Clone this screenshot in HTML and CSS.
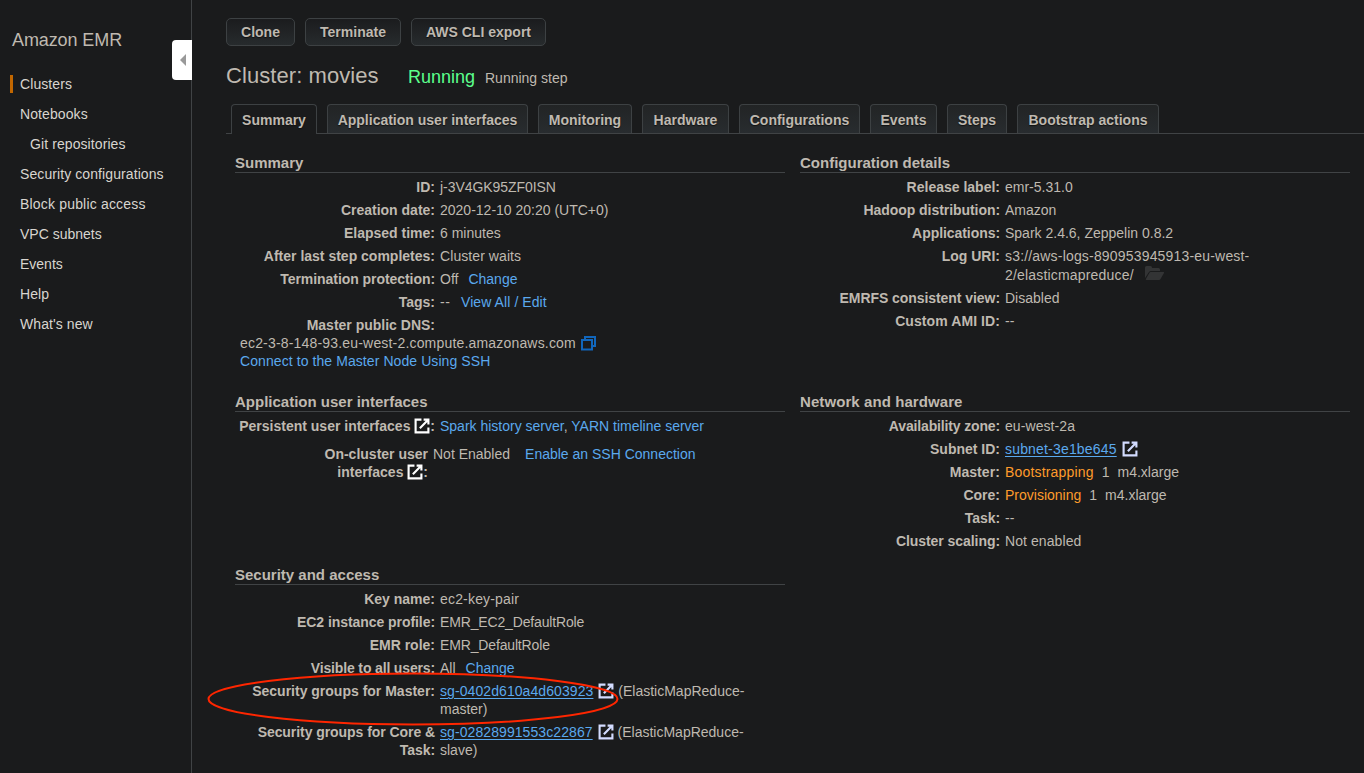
FILE: index.html
```html
<!DOCTYPE html>
<html lang="en">
<head>
<meta charset="utf-8">
<title>Amazon EMR</title>
<link rel="stylesheet" href="styles.css">
</head>
<body>
<svg class="defs" width="0" height="0">
  <symbol id="ext" viewBox="0.5 0.5 15 15">
    <path d="M7.500 2H2V14H14V9.500" fill="none" stroke="currentColor" stroke-width="2"/>
    <path d="M9.500 2H14V6.500M14 2L6 10" fill="none" stroke="currentColor" stroke-width="2"/>
  </symbol>
</svg>
<div class="app">
  <aside class="sidebar">
    <h2 class="brand">Amazon EMR</h2>
    <nav class="nav">
      <a class="nav-item active">Clusters</a>
      <a class="nav-item">Notebooks</a>
      <a class="nav-item sub">Git repositories</a>
      <a class="nav-item">Security configurations</a>
      <a class="nav-item wider">Block public access</a>
      <a class="nav-item flat">VPC subnets</a>
      <a class="nav-item flat">Events</a>
      <a class="nav-item">Help</a>
      <a class="nav-item">What's new</a>
    </nav>
    <div class="collapse"><svg width="6" height="12" viewBox="0 0 6 12"><path d="M6 0V12L0 6Z" fill="#999"/></svg></div>
  </aside>
  <main class="main">
    <div class="buttons">
      <button class="btn clone">Clone</button>
      <button class="btn terminate">Terminate</button>
      <button class="btn export">AWS CLI export</button>
    </div>
    <header class="heading">
      <h1 class="title">Cluster: movies</h1>
      <span class="state">Running</span>
      <span class="detail">Running step</span>
    </header>
    <div class="tabs">
      <div class="tab t1 current">Summary</div>
      <div class="tab t2">Application user interfaces</div>
      <div class="tab t3">Monitoring</div>
      <div class="tab t4">Hardware</div>
      <div class="tab t5">Configurations</div>
      <div class="tab t6">Events</div>
      <div class="tab t7">Steps</div>
      <div class="tab t8">Bootstrap actions</div>
    </div>
    <div class="grid">
      <section class="card">
        <h3 class="card-title">Summary</h3>
        <div class="row"><b class="label">ID:</b><span class="tight">j-3V4GK95ZF0ISN</span></div>
        <div class="row"><b class="label">Creation date:</b><span>2020-12-10 20:20 (UTC+0)</span></div>
        <div class="row"><b class="label">Elapsed time:</b><span>6 minutes</span></div>
        <div class="row"><b class="label">After last step completes:</b><span class="wide">Cluster waits</span></div>
        <div class="row"><b class="label tight">Termination protection:</b><span>Off</span><a class="link gap">Change</a></div>
        <div class="row"><b class="label">Tags:</b><span class="dashes">--</span><a class="link gap wide">View All / Edit</a></div>
        <div class="row"><b class="label">Master public DNS:</b></div>
        <div class="dns"><span class="wider">ec2-3-8-148-93.eu-west-2.compute.amazonaws.com</span><svg class="copy" width="15" height="15" viewBox="0 0 15 15"><path d="M4 4V1H14V10H11M1 4H11V13.500H1Z" fill="none" stroke="#1166bb" stroke-width="2"/></svg></div>
        <div class="dns"><a class="link wide">Connect to the Master Node Using SSH</a></div>
      </section>
      <section class="card">
        <h3 class="card-title">Configuration details</h3>
        <div class="row"><b class="label">Release label:</b><span>emr-5.31.0</span></div>
        <div class="row"><b class="label tight">Hadoop distribution:</b><span>Amazon</span></div>
        <div class="row"><b class="label tight">Applications:</b><span>Spark 2.4.6, Zeppelin 0.8.2</span></div>
        <div class="row log"><b class="label">Log URI:</b><span class="wider">s3://aws-logs-890953945913-eu-west-<br>2/elasticmapreduce/<svg class="folder" width="20" height="14" viewBox="0 0 20 14"><path d="M0 12V1.500Q0 0 1.500 0H5.500Q7 0 7 1.500V2H13.500Q15 2 15 3.500V5H6Q4.800 5 4 6Z" fill="#333435"/><path d="M5.500 6H18.500Q19.500 6 19 7L15.500 13Q15 14 14 14H1.500Q0.300 14 1 12.800L4.300 7Q4.800 6 5.500 6Z" fill="#333435"/></svg></span></div>
        <div class="row"><b class="label tight">EMRFS consistent view:</b><span>Disabled</span></div>
        <div class="row"><b class="label wide">Custom AMI ID:</b><span>--</span></div>
      </section>
      <section class="card">
        <h3 class="card-title">Application user interfaces</h3>
        <div class="row"><b class="label">Persistent user interfaces <svg class="ext white"><use href="#ext"/></svg>:</b><span><a class="link">Spark history server</a>, <a class="link">YARN timeline server</a></span></div>
        <div class="row oncluster"><b class="label">On-cluster user<br>interfaces <svg class="ext white"><use href="#ext"/></svg>:</b><span>Not Enabled</span><a class="link widegap">Enable an SSH Connection</a></div>
      </section>
      <section class="card">
        <h3 class="card-title wide">Network and hardware</h3>
        <div class="row"><b class="label tighter">Availability zone:</b><span class="wide">eu-west-2a</span></div>
        <div class="row"><b class="label">Subnet ID:</b><span><a class="link underlined wider">subnet-3e1be645</a><svg class="ext lilac"><use href="#ext"/></svg></span></div>
        <div class="row spaced"><b class="label wide">Master:</b><span class="pending wider">Bootstrapping</span><span>1</span><span>m4.xlarge</span></div>
        <div class="row spaced"><b class="label">Core:</b><span class="pending">Provisioning</span><span>1</span><span>m4.xlarge</span></div>
        <div class="row"><b class="label tight">Task:</b><span>--</span></div>
        <div class="row"><b class="label tight">Cluster scaling:</b><span class="wide">Not enabled</span></div>
      </section>
      <section class="card">
        <h3 class="card-title">Security and access</h3>
        <div class="row"><b class="label">Key name:</b><span class="wider">ec2-key-pair</span></div>
        <div class="row"><b class="label tight">EC2 instance profile:</b><span class="tighter">EMR_EC2_DefaultRole</span></div>
        <div class="row"><b class="label">EMR role:</b><span class="tighter">EMR_DefaultRole</span></div>
        <div class="row"><b class="label tighter">Visible to all users:</b><span>All</span><a class="link gap">Change</a></div>
        <div class="row"><b class="label">Security groups for Master:</b><span><a class="link underlined wide">sg-0402d610a4d603923</a><svg class="ext lilac"><use href="#ext"/></svg> (ElasticMapReduce-<br>master)</span></div>
        <div class="row"><b class="label tight">Security groups for Core &amp;<br>Task:</b><span><a class="link underlined wide">sg-02828991553c22867</a><svg class="ext lilac"><use href="#ext"/></svg> (ElasticMapReduce-<br>slave)</span></div>
      </section>
    </div>
  </main>
  <svg class="marker" width="414" height="56" viewBox="0 0 414 56"><ellipse cx="207" cy="28" rx="204.500" ry="25.500" fill="none" stroke="#ff2600" stroke-width="2"/></svg>
</div>
</body>
</html>
```
FILE: styles.css
```css
* { box-sizing: border-box; }
body {
  margin: 0;
  background: #1a1b1c;
  color: #bfb9b0;
  font: 14px/18px "Liberation Sans", Arial, sans-serif;
}
.defs { position: absolute; }
.app { position: relative; display: flex; width: 1364px; height: 773px; overflow: hidden; }
.sidebar { position: relative; flex: none; width: 192px; border-right: 1px solid #404345; padding-top: 28px; }
.brand { margin: 0 0 20px 12px; font-size: 18px; line-height: 24px; font-weight: 400; letter-spacing: -0.1px; }
.nav { display: flex; flex-direction: column; gap: 12px; padding: 3px 0 0 10px; }
.nav-item { padding-left: 10px; color: #d8d5cf; letter-spacing: 0.09px; }
.nav-item.active { border-left: 3px solid #c26700; padding-left: 7px; }
.nav-item.sub { padding-left: 20px; }
.nav-item.flat { letter-spacing: 0; }
.collapse {
  position: absolute; left: 172px; top: 40px; width: 20px; height: 40px;
  display: flex; align-items: center; justify-content: flex-end; padding-right: 6px;
  background: #fff; border-radius: 4px 0 0 4px;
}
.main { flex: none; width: 1172px; padding: 18px 0 0 34px; }
.buttons { display: flex; gap: 10px; }
.btn {
  height: 28px; padding: 0; border: 1px solid #3d4143; border-radius: 5px;
  background: linear-gradient(#1b1c1e, #272b2d); color: #bfb9b0;
  font: bold 14px/18px "Liberation Sans", Arial, sans-serif;
  text-shadow: 0 1px 1px #111;
}
.clone { width: 69px; }
.terminate { width: 96px; }
.export { width: 135px; }
.heading { display: flex; align-items: baseline; height: 58px; padding-top: 16px; }
.title { margin: 0; width: 182px; font-size: 22px; line-height: 28px; font-weight: 400; letter-spacing: 0.07px; }
.state { width: 77px; font-size: 18px; color: #5cff8c; }
.tabs { display: flex; gap: 10px; height: 30px; padding-left: 5px; border-bottom: 1px solid #404345; }
.tab {
  height: 29px; padding-top: 6px; border: 1px solid #3d4143; border-bottom: 0; border-radius: 4px 4px 0 0;
  background: linear-gradient(#222425, #282c2f); font-weight: bold; text-align: center; white-space: nowrap;
  text-shadow: 0 1px 1px #111;
}
.tab.current { background: #1a1b1c; height: 30px; }
.t1 { width: 86px; }
.t2 { width: 201px; }
.t3 { width: 94px; }
.t4 { width: 87px; }
.t5 { width: 121px; }
.t6 { width: 67px; }
.t7 { width: 60px; }
.t8 { width: 142px; }
.grid { display: grid; grid-template-columns: 550px 550px; grid-template-rows: 239px 173px auto; column-gap: 15px; padding: 19px 0 0 9px; }
.card-title { margin: 0; height: 20px; border-bottom: 1px solid #404345; font-size: 15px; line-height: 20px; }
.row { display: flex; gap: 5px; margin-top: 5px; white-space: nowrap; }
.label { flex: none; width: 200px; text-align: right; }
.link { color: #5ba9ee; }
.gap { margin-left: 5px; }
.underlined { text-decoration: underline; text-underline-offset: 2px; }
.wide { letter-spacing: 0.08px; }
.wider, .nav-item.wider { letter-spacing: 0.18px; }
.tight { letter-spacing: -0.06px; }
.tighter { letter-spacing: -0.15px; }
.dashes { width: 11px; letter-spacing: 0.6px; }
.dns { height: 18px; padding-left: 5px; white-space: nowrap; }
.copy { margin-left: 5px; vertical-align: -3px; }
.folder { margin-left: 11px; vertical-align: 0; }
.log span { line-height: 19px; height: 37px; }
.ext { width: 16px; height: 16px; vertical-align: -3px; }
.white { color: #fff; }
.lilac { color: #d3dcff; margin-left: 5px; }
.oncluster { margin-top: 10px; }
.oncluster .label { width: 193px; }
.widegap { margin-left: 10px; }
.spaced span + span { margin-left: 3px; }
.pending { color: #ff9b2b; }
.marker { position: absolute; left: 206px; top: 671px; }
```
